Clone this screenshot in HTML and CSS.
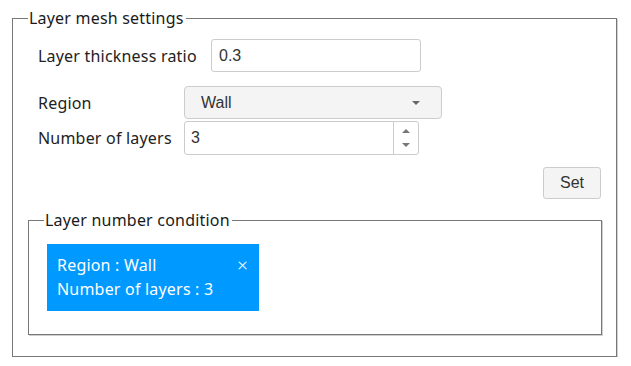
FILE: index.html
```html
<!DOCTYPE html>
<html>
<head>
<meta charset="utf-8">
<link rel="stylesheet" href="styles.css">
</head>
<body>
<fieldset class="group outer">
  <legend class="legend">Layer mesh settings</legend>
  <div class="row row-ratio">
    <label class="label">Layer thickness ratio</label>
    <input class="field ratio" type="text" value="0.3">
  </div>
  <div class="row row-region">
    <label class="label label-col">Region</label>
    <div class="select">
      <span class="select-text">Wall</span>
      <span class="caret"></span>
    </div>
  </div>
  <div class="row row-layers">
    <label class="label label-col">Number of layers</label>
    <div class="number">
      <span class="number-text">3</span>
      <span class="spin">
        <span class="spin-up"></span>
        <span class="spin-down"></span>
      </span>
    </div>
  </div>
  <div class="actions">
    <button class="btn">Set</button>
  </div>
  <fieldset class="group inner">
    <legend class="legend">Layer number condition</legend>
    <div class="card">
      <div class="card-line"><span>Region : Wall</span><span class="close">×</span></div>
      <div class="card-line">Number of layers : 3</div>
    </div>
  </fieldset>
</fieldset>
</body>
</html>
```

FILE: styles.css
```css
html, body {
  margin: 0;
  padding: 0;
  background: #ffffff;
}
body {
  padding: 8px 14px 0 12px;
  font-family: "Noto Sans", "Noto Sans CJK JP", sans-serif;
  font-size: 16px;
  letter-spacing: 0.2px;
  color: #222;
}
.group {
  margin: 0;
  padding: 0;
  border: 1px solid #777;
  box-shadow: 1px 1px 0 #cfcfcf;
  min-width: 0;
}
.outer {
  width: 605px;
  box-sizing: border-box;
  height: 349px;
  padding: 0 15px 0 25px;
}
.legend {
  margin-left: -10px;
  padding: 0 2px 0 1px;
  line-height: 20px;
  color: #1a1a1a;
}
.row {
  display: flex;
  align-items: center;
}
.row-ratio {
  margin-top: 11px;
}
.row-ratio .label {
  width: 173px;
  flex: none;
}
.row-region {
  margin-top: 14px;
}
.row-layers {
  margin-top: 2px;
}
.label {
  color: #222;
  line-height: 20px;
}
.label-col {
  width: 146px;
  flex: none;
}
.field {
  box-sizing: border-box;
  width: 210px;
  height: 33px;
  border: 1px solid #cccccc;
  border-radius: 3px;
  padding: 0 7px;
  font-family: "Liberation Sans", Arial, sans-serif;
  font-size: 16px;
  letter-spacing: 0;
  color: #333;
  outline: none;
  margin: 0;
}
.select {
  box-sizing: border-box;
  width: 258px;
  height: 33px;
  border: 1px solid #cccccc;
  border-radius: 4px;
  background: #f4f4f4;
  display: flex;
  align-items: center;
  justify-content: space-between;
  padding: 0 21px 0 16px;
  font-family: "Liberation Sans", Arial, sans-serif;
  font-size: 16px;
  letter-spacing: 0;
  color: #333;
}
.caret {
  width: 0;
  height: 0;
  border-left: 4px solid transparent;
  border-right: 4px solid transparent;
  border-top: 4px solid #666;
}
.number {
  box-sizing: border-box;
  width: 235px;
  height: 34px;
  border: 1px solid #cccccc;
  border-radius: 3px;
  display: flex;
  align-items: stretch;
  font-family: "Liberation Sans", Arial, sans-serif;
  font-size: 16px;
  letter-spacing: 0;
  color: #333;
}
.number-text {
  flex: 1;
  display: flex;
  align-items: center;
  padding-left: 6px;
}
.spin {
  width: 24px;
  border-left: 1px solid #cccccc;
  display: flex;
  flex-direction: column;
  align-items: center;
  justify-content: center;
  gap: 10px;
}
.spin-up {
  width: 0;
  height: 0;
  border-left: 4px solid transparent;
  border-right: 4px solid transparent;
  border-bottom: 4px solid #777;
}
.spin-down {
  width: 0;
  height: 0;
  border-left: 4px solid transparent;
  border-right: 4px solid transparent;
  border-top: 4px solid #777;
}
.actions {
  display: flex;
  justify-content: flex-end;
  margin-top: 12px;
}
.btn {
  box-sizing: border-box;
  width: 58px;
  height: 32px;
  border: 1px solid #cccccc;
  border-radius: 3px;
  background: #f4f4f4;
  font-family: "Liberation Sans", Arial, sans-serif;
  font-size: 16px;
  color: #333;
  padding: 0;
}
.inner {
  margin: 11px 0 0 -10px;
  height: 125px;
  box-sizing: border-box;
  padding: 0 0 0 18px;
  width: 574px;
}
.inner .legend {
  margin-left: -3px;
}
.card {
  margin-top: 14px;
  width: 212px;
  height: 67px;
  box-sizing: border-box;
  background: #0099ff;
  color: #ffffff;
  padding: 9px 10px 10px 10px;
  line-height: 24px;
}
.card-line {
  display: flex;
  justify-content: space-between;
}
.close {
  font-size: 19px;
  font-weight: 300;
  padding-right: 1px;
}
```
